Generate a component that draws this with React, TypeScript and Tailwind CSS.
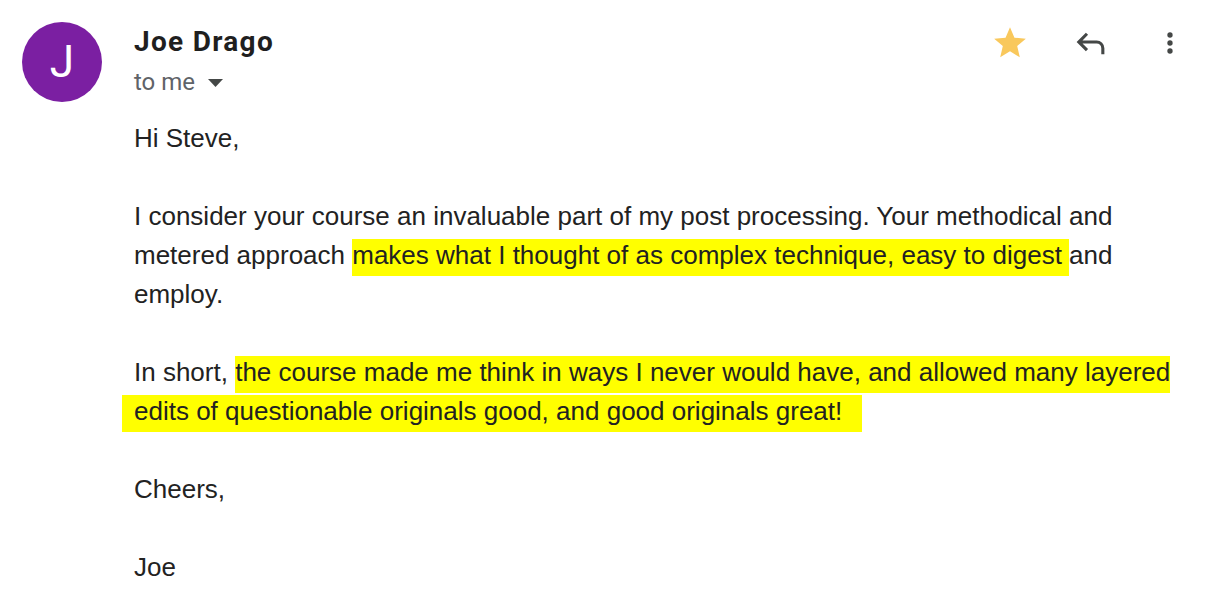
import React from 'react';

const body = { fontFamily: '"Liberation Sans", Arial, sans-serif' };
const ui = { fontFamily: 'Roboto, "Noto Sans", sans-serif' };

function StarIcon() {
  return (
    <svg width="38" height="38" viewBox="0 0 24 24" fill="#f9c85c">
      <path d="M12 17.27L18.18 21l-1.64-7.03L22 9.24l-7.19-.61L12 2 9.19 8.63 2 9.24l5.46 4.73L5.82 21z" />
    </svg>
  );
}

function ReplyIcon() {
  return (
    <svg width="37" height="37" viewBox="0 -960 960 960" fill="#444746">
      <path d="M760-200v-160q0-50-35-85t-85-35H273l144 144-57 56-240-240 240-240 57 56-144 144h367q83 0 141.5 58.5T840-360v160h-80Z" />
    </svg>
  );
}

function MoreIcon() {
  return (
    <svg width="32" height="32" viewBox="0 0 24 24" fill="#444746">
      <circle cx="12" cy="6" r="2" />
      <circle cx="12" cy="12" r="2" />
      <circle cx="12" cy="18" r="2" />
    </svg>
  );
}

const hl = 'bg-[#ffff00] pt-[1px] pb-[6px]';

export default function App() {
  return (
    <div className="w-[1220px] h-[606px] bg-white overflow-hidden">
      <div className="flex pl-[22px] pt-[22px]">
        {/* Avatar */}
        <div
          className="w-[80px] h-[80px] rounded-full bg-[#7b1fa2] flex items-center justify-center text-white text-[44px] leading-none shrink-0"
          style={ui}
        >
          J
        </div>

        <div className="flex-1 pl-[32px]">
          {/* Header */}
          <div className="flex items-start justify-between pr-[30px]">
            <div style={ui} className="pt-[2px]">
              <div className="text-[28px] leading-[36px] font-bold tracking-[1.3px] text-[#1f1f1f]">Joe Drago</div>
              <div className="mt-[8px] flex items-center text-[24px] leading-[28px] text-[#5f6368]">
                to me
                <svg className="ml-[13px] mt-[2px]" width="15" height="8" viewBox="0 0 15 8" fill="#444746">
                  <path d="M0 0h15L7.5 8z" />
                </svg>
              </div>
            </div>
            <div className="flex items-center gap-[40px] pt-[2px]">
              <div className="w-[40px] flex justify-center"><StarIcon /></div>
              <div className="w-[40px] flex justify-center"><ReplyIcon /></div>
              <div className="w-[40px] flex justify-center"><MoreIcon /></div>
            </div>
          </div>

          {/* Message body */}
          <div className="mt-[23px] text-[26px] leading-[39px] text-[#222222] whitespace-nowrap" style={body}>
            <p>Hi Steve,</p>
            <p className="mt-[39px]">
              I consider your course an invaluable part of my post processing. Your methodical and
              <br />
              metered approach <span className={hl}>makes what I thought of as complex technique, easy to digest </span>and
              <br />
              employ.
            </p>
            <p className="mt-[39px]">
              In short, <span className={hl}>the course made me think in ways I never would have, and allowed many layered</span>
              <br />
              <span className={`${hl} ml-[-12px] pl-[12px] pr-[20px]`}>edits of questionable originals good, and good originals great!</span>
            </p>
            <p className="mt-[39px]">Cheers,</p>
            <p className="mt-[39px]">Joe</p>
          </div>
        </div>
      </div>
    </div>
  );
}
